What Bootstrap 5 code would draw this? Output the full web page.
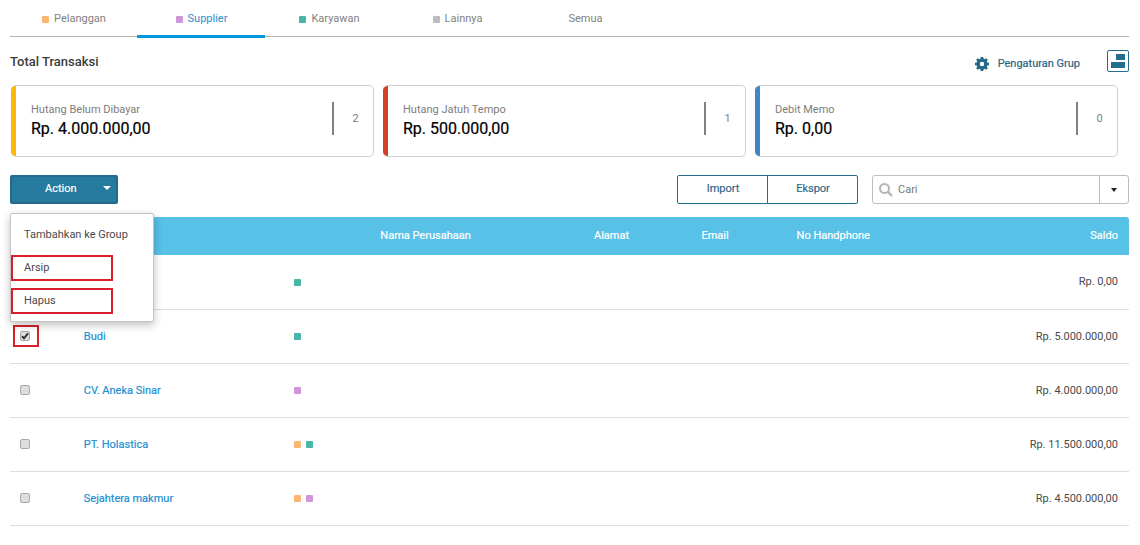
<!DOCTYPE html>
<html lang="id">
<head>
<meta charset="utf-8">
<meta name="viewport" content="width=device-width, initial-scale=1">
<title>Kontak Supplier</title>
<link href="https://cdn.jsdelivr.net/npm/bootstrap@5.3.0/dist/css/bootstrap.min.css" rel="stylesheet">
<style>
  body { font-family: Roboto, "Liberation Sans", sans-serif; font-size: 11px; line-height: 16px; color: #4a4a4a; }
  a { text-decoration: none; }
  .page { padding: 0 11px 0 10px; }

  .dot { display: inline-block; width: 7px; height: 7px; border-radius: 1px; }
  .dot-orange { background: #fbb674; }
  .dot-purple { background: #d196da; }
  .dot-teal { background: #47b5a7; }
  .dot-gray { background: #bdbdbd; }

  .group-tabs { border-bottom: 1px solid #b4b4b4; margin-bottom: 13px; }
  .group-tabs .nav-link { width: 128px; height: 38px; margin-bottom: -2px; padding: 3px 0 0 1px; border-bottom: 3px solid transparent; color: #7f7f7f; display: flex; align-items: center; justify-content: center; gap: 5px; }
  .group-tabs .nav-item:first-child .nav-link { width: 127px; }
  .group-tabs .nav-link.active { color: #2a8fd0; border-bottom-color: #0698dc; }

  .page-title { font-size: 13px; line-height: 22px; font-weight: 500; color: #3c3c3c; padding-top: 1px; }
  .group-settings { color: #2a6484; gap: 9px; margin-right: 27px; padding-top: 6px; }
  .group-settings, .btn-tool, .btn-action, .total-amount, .contacts th, .contacts a { -webkit-text-stroke: 0.2px; }
  .view-toggle { width: 22px; height: 22px; background: #fff; border: 1px solid #246d8c; border-radius: 2px; }

  .totals { display: grid; grid-template-columns: repeat(3, 1fr); gap: 9px; padding: 0 11px 0 1px; margin: 12px 0 18px; }
  .total-card { border-radius: 5px; border-color: #cfcfcf; border-left: 0; overflow: hidden; }
  .total-card .stripe { width: 5px; }
  .total-card .total-body { padding: 16px 0 16px 15px; }
  .total-label { color: #7d7d7d; }
  .total-amount { font-size: 16px; line-height: 22px; color: #000; }
  .total-count { width: 41px; height: 33px; line-height: 33px; padding-left: 4px; border-left: 2px solid #808080; text-align: center; color: #7d7d7d; }
  .stripe-yellow { background: #fdb70c; }
  .stripe-red { background: #d43f25; }
  .stripe-blue { background: #3e86c6; }

  .toolbar { margin-bottom: 13px; }
  .btn-action { --bs-btn-font-size: 11px; width: 108px; height: 29px; padding: 0 5px 2px 33px; color: #fff; background: #257a9e; border: 2px solid #236988; border-radius: 2px; line-height: 16px; }
  .btn-action:hover, .btn-action.show { color: #fff !important; background: #257a9e !important; border-color: #236988 !important; }
  .btn-action::after { border-top: 4px solid; border-right: 4px solid transparent; border-left: 4px solid transparent; margin: 0 0 2px; }
  .toolbar .action-menu { --bs-dropdown-min-width: 144px; top: 38px; left: 0; margin: 0; padding: 8px 0 7px; border: 1px solid #c4c4c4; border-radius: 2px; box-shadow: 0 3px 8px rgba(0,0,0,.25); font-size: 11px; }
  .action-menu.show { display: flex; flex-direction: column; gap: 7px; }
  .action-menu .dropdown-item { width: 102px; height: 26px; padding: 3px 0 0 11px; border: 2px solid transparent; color: #4a4a4a; line-height: 16px; }
  .action-menu .marked, .marked-check { border: 2px solid #d8202a !important; }

  .btn-tool { --bs-btn-font-size: 11px; width: 91px; height: 29px; padding: 0 0 1px 1px; color: #35698a; border-color: #246d8c; border-radius: 2px; line-height: 16px; }
  .tool-group { margin-right: 14px; }
  .search-box { width: 257px; height: 29px; border: 1px solid #bdbdbd; border-radius: 3px; padding-left: 6px; }
  .search-box input { min-width: 0; border: 0; padding: 0 0 0 5px; outline: 0; font-size: 11px; color: #555; }
  .search-box input::placeholder { color: #777; }
  .search-more { width: 29px; border: 0; border-left: 1px solid #bdbdbd; background: none; color: #222; padding: 0; }
  .search-more::after { border-width: 4px 3px 0; border-style: solid; border-color: #222 transparent; margin: 0; vertical-align: 1px; }

  .contacts { table-layout: fixed; --bs-table-color: #4a4a4a; --bs-table-bg: transparent; border-color: #dedede; margin: 0; }
  .contacts > :not(caption) > * > * { padding: 1px 11px 0 10px; height: 54px; vertical-align: middle; }
  .contacts > thead > tr > th { height: 38px; background: #57c1e8; color: #fff; font-weight: 400; border: 0; padding-top: 0; padding-bottom: 1px; white-space: nowrap; }
  .contacts thead th:first-child { border-top-left-radius: 3px; }
  .contacts thead th:last-child { border-top-right-radius: 3px; }
  .contacts a { color: #1c90d2; }
  .contacts > tbody > tr > .check-cell { padding: 0 0 0 3px; }
  .contacts .dot { margin-right: 5px; vertical-align: middle; }
  .check-wrap { display: inline-flex; align-items: center; width: 26px; height: 22px; padding-left: 7px; vertical-align: middle; margin: 0; }
  .marked-check { padding-left: 5px; }
  .row-check { appearance: none; width: 10px; height: 10px; margin: 0; border: 1px solid #a9a9a9; border-radius: 2px; background: #dedede; }
  .row-check:checked { background: #dedede url("data:image/svg+xml,%3Csvg xmlns='http://www.w3.org/2000/svg' viewBox='0 0 8 8'%3E%3Cpath d='M1 4.2 3 6.3 7 1.3' fill='none' stroke='%23333' stroke-width='2'/%3E%3C/svg%3E") center / 8px no-repeat; }
</style>
</head>
<body>
<main class="page">
  <nav aria-label="Grup kontak">
    <ul class="nav group-tabs">
      <li class="nav-item"><a class="nav-link" href="#"><span class="dot dot-orange"></span>Pelanggan</a></li>
      <li class="nav-item"><a class="nav-link active" aria-current="page" href="#"><span class="dot dot-purple"></span>Supplier</a></li>
      <li class="nav-item"><a class="nav-link" href="#"><span class="dot dot-teal"></span>Karyawan</a></li>
      <li class="nav-item"><a class="nav-link" href="#"><span class="dot dot-gray"></span>Lainnya</a></li>
      <li class="nav-item"><a class="nav-link" href="#">Semua</a></li>
    </ul>
  </nav>

  <header class="d-flex align-items-start">
    <h1 class="page-title m-0 me-auto">Total Transaksi</h1>
    <a class="group-settings d-flex align-items-center" href="#">
      <svg width="14" height="14" viewBox="0 0 14 14" aria-hidden="true"><path fill="#246987" fill-rule="evenodd" d="M5.8 0h2.4l.4 1.8 1 .4L11.200 1.200 12.800 2.800 11.800 4.400l.4 1L14 5.800v2.400l-1.800.4-.4 1 1 1.600-1.600 1.600-1.600-1-1 .4L8.200 14H5.800l-.4-1.800-1-.4-1.600 1-1.600-1.600 1-1.600-.4-1L0 8.200V5.800l1.800-.4.4-1-1-1.600 1.600-1.600 1.600 1 1-.4zM7 4.800a2.200 2.200 0 1 0 0 4.400 2.200 2.200 0 0 0 0-4.400z"/></svg>
      <span>Pengaturan Grup</span>
    </a>
    <button class="view-toggle p-0 d-flex align-items-center justify-content-center" type="button" aria-label="Ubah tampilan">
      <svg class="flex-shrink-0" width="20" height="20" viewBox="0 0 20 20" aria-hidden="true"><path fill="#246d8c" d="M8 3h9v6H8zM3 11h14v6H3z"/></svg>
    </button>
  </header>

  <section class="totals" aria-label="Ringkasan">
    <div class="card total-card flex-row">
      <div class="stripe stripe-yellow"></div>
      <div class="total-body d-flex flex-grow-1 align-items-start">
        <div class="me-auto"><div class="total-label">Hutang Belum Dibayar</div><div class="total-amount">Rp. 4.000.000,00</div></div>
        <div class="total-count">2</div>
      </div>
    </div>
    <div class="card total-card flex-row">
      <div class="stripe stripe-red"></div>
      <div class="total-body d-flex flex-grow-1 align-items-start">
        <div class="me-auto"><div class="total-label">Hutang Jatuh Tempo</div><div class="total-amount">Rp. 500.000,00</div></div>
        <div class="total-count">1</div>
      </div>
    </div>
    <div class="card total-card flex-row">
      <div class="stripe stripe-blue"></div>
      <div class="total-body d-flex flex-grow-1 align-items-start">
        <div class="me-auto"><div class="total-label">Debit Memo</div><div class="total-amount">Rp. 0,00</div></div>
        <div class="total-count">0</div>
      </div>
    </div>
  </section>

  <div class="toolbar d-flex">
    <div class="dropdown me-auto">
      <button class="btn btn-action dropdown-toggle show d-flex align-items-center justify-content-between" type="button" data-bs-toggle="dropdown" data-bs-display="static" aria-expanded="true">Action</button>
      <ul class="dropdown-menu action-menu show">
        <li><a class="dropdown-item" href="#">Tambahkan ke Group</a></li>
        <li><a class="dropdown-item marked" href="#">Arsip</a></li>
        <li><a class="dropdown-item marked" href="#">Hapus</a></li>
      </ul>
    </div>
    <div class="btn-group tool-group">
      <button class="btn btn-tool" type="button">Import</button>
      <button class="btn btn-tool" type="button">Ekspor</button>
    </div>
    <div class="search-box d-flex align-items-stretch">
      <svg class="align-self-center" width="14" height="14" viewBox="0 0 14 14" aria-hidden="true"><circle cx="5.500" cy="5.500" r="4.500" fill="none" stroke="#b5b5b5" stroke-width="2"/><path d="M9 9l4 4" stroke="#b5b5b5" stroke-width="2.400"/></svg>
      <input class="flex-grow-1" type="text" placeholder="Cari" aria-label="Cari">
      <button class="search-more dropdown-toggle" type="button" aria-label="Filter pencarian"></button>
    </div>
  </div>

  <table class="table contacts">
    <colgroup>
      <col style="width:5.7%"><col style="width:18.8%"><col style="width:7.7%"><col style="width:19.1%"><col style="width:9.6%"><col style="width:8.500%"><col style="width:13%"><col>
    </colgroup>
    <thead>
      <tr><th></th><th></th><th></th><th>Nama Perusahaan</th><th>Alamat</th><th>Email</th><th>No Handphone</th><th class="text-end">Saldo</th></tr>
    </thead>
    <tbody>
      <tr>
        <td class="check-cell"><label class="check-wrap"><input class="row-check" type="checkbox" aria-label="Pilih kontak"></label></td>
        <td></td>
        <td><span class="dot dot-teal"></span></td><td></td><td></td><td></td><td></td>
        <td class="text-end">Rp. 0,00</td>
      </tr>
      <tr>
        <td class="check-cell"><label class="check-wrap marked-check"><input class="row-check" type="checkbox" checked aria-label="Pilih Budi"></label></td>
        <td><a href="#">Budi</a></td>
        <td><span class="dot dot-teal"></span></td><td></td><td></td><td></td><td></td>
        <td class="text-end">Rp. 5.000.000,00</td>
      </tr>
      <tr>
        <td class="check-cell"><label class="check-wrap"><input class="row-check" type="checkbox" aria-label="Pilih CV. Aneka Sinar"></label></td>
        <td><a href="#">CV. Aneka Sinar</a></td>
        <td><span class="dot dot-purple"></span></td><td></td><td></td><td></td><td></td>
        <td class="text-end">Rp. 4.000.000,00</td>
      </tr>
      <tr>
        <td class="check-cell"><label class="check-wrap"><input class="row-check" type="checkbox" aria-label="Pilih PT. Holastica"></label></td>
        <td><a href="#">PT. Holastica</a></td>
        <td><span class="dot dot-orange"></span><span class="dot dot-teal"></span></td><td></td><td></td><td></td><td></td>
        <td class="text-end">Rp. 11.500.000,00</td>
      </tr>
      <tr>
        <td class="check-cell"><label class="check-wrap"><input class="row-check" type="checkbox" aria-label="Pilih Sejahtera makmur"></label></td>
        <td><a href="#">Sejahtera makmur</a></td>
        <td><span class="dot dot-orange"></span><span class="dot dot-purple"></span></td><td></td><td></td><td></td><td></td>
        <td class="text-end">Rp. 4.500.000,00</td>
      </tr>
    </tbody>
  </table>
</main>
<script src="https://cdn.jsdelivr.net/npm/bootstrap@5.3.0/dist/js/bootstrap.bundle.min.js"></script>
</body>
</html>
